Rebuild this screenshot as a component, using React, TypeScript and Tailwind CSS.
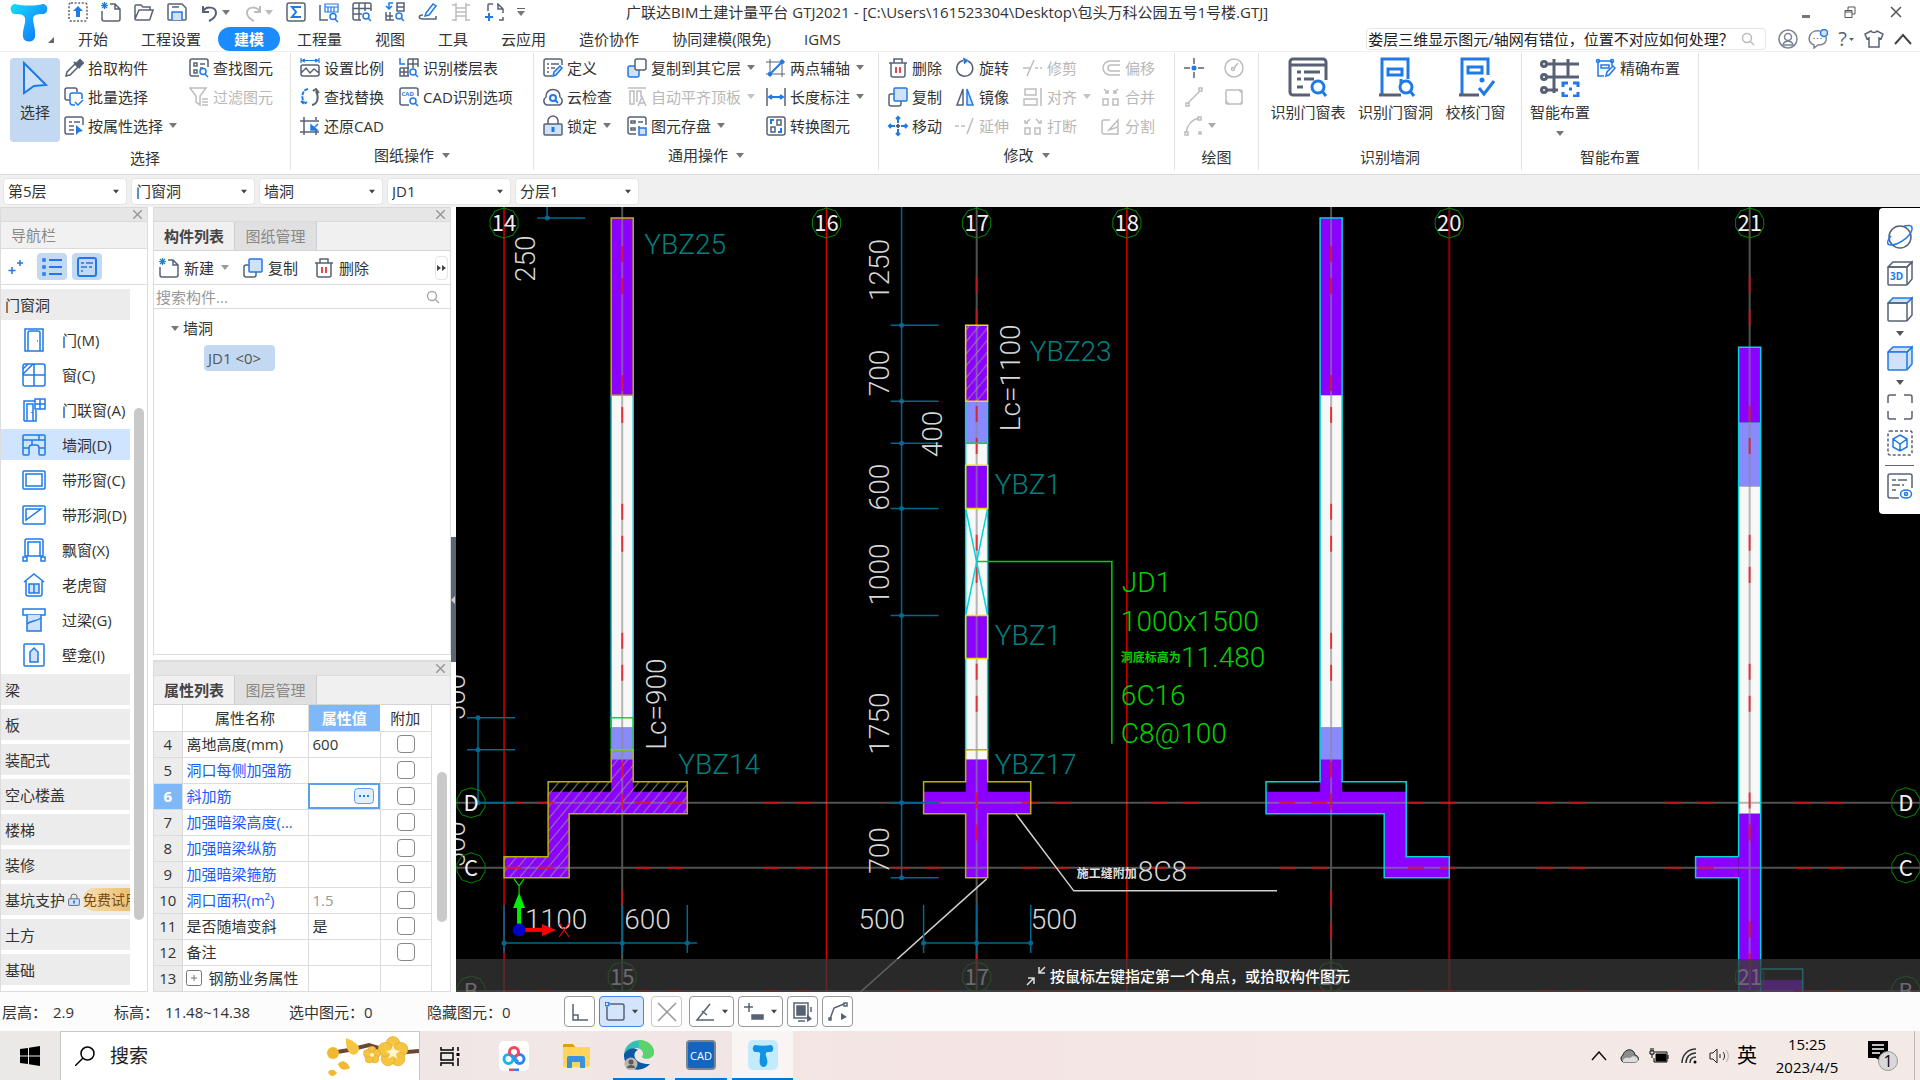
import { ReactNode } from 'react';
import clsx from 'clsx';

const G = '#586174';
const B = '#1f7ae8';
const L = '#cfe2f9';

// 20x20 toolbar glyphs
const glyphs: Record<string, ReactNode> = {
  upload: <><rect x="1" y="1" width="18" height="18" rx="2" strokeDasharray="2 1.6" /><path d="M10 4l5 5h-3v6H8V9H5z" fill={B} stroke="none" /></>,
  newFile: <><path d="M9 2h5l5 5v10a2 2 0 0 1-2 2H3a2 2 0 0 1-2-2V9M14 2v5h5" /><path d="M1 1l5 5M6 1L1 6M3.500 0v7M0 3.500h7" stroke={B} strokeWidth="1.200" /></>,
  open: <path d="M1 17V4a1 1 0 0 1 1-1h5l2 2h7v3M1 17L5 8h14l-3 9a1 1 0 0 1-1 1H2a1 1 0 0 1-1-1z" />,
  save: <><path d="M2 2h13l4 4v11a1 1 0 0 1-1 1H2a1 1 0 0 1-1-1V3a1 1 0 0 1 1-1zM5 5h7" /><path d="M5 18v-8h10v8" stroke={B} fill={L} /></>,
  undo: <path d="M3 4v6h6M3 10c2-6 13-6 13 1 0 4-3 6-7 8" strokeWidth="2" />,
  redo: <path d="M17 4v6h-6M17 10C15 4 4 4 4 11c0 4 3 6 7 8" strokeWidth="2" />,
  sum: <><rect x="1" y="1" width="18" height="18" rx="2" /><path d="M14 6V5H6l4 5-4 5h8v-1" stroke={B} strokeWidth="2" /></>,
  tableFind: <><path d="M1 3v15h8" /><path d="M6 2h13v8H6zM6 5h13M9 5v5M12 5v5M15 5v5" stroke={B} strokeWidth="1.200" /><circle cx="14" cy="14.500" r="3" stroke={B} /><path d="M16 17l3 3" stroke={B} /></>,
  gridFind: <><path d="M9 18H3a2 2 0 0 1-2-2V3a2 2 0 0 1 2-2h14a2 2 0 0 1 2 2v6M7 1v17M13 1v8M1 6.500h18M1 12h9" /><circle cx="14" cy="14" r="3" stroke={B} /><path d="M16 16l3 3" stroke={B} /></>,
  swapFind: <><path d="M1 10v8h8M1 14h7M5 10v8M12 1h7v8h-7zM12 5h7" /><path d="M8 1H4v5M1 4l3 3 3-3" stroke={B} /><circle cx="14" cy="14" r="3" stroke={B} /><path d="M16 16l3 3" stroke={B} /></>,
  brush: <><path d="M8 11l7-9 3 2-7 9-4 1z" stroke={B} /><path d="M5 13c-5 0-5 4 0 4h13v-3" /></>,
  ladder: <path d="M5 1v18M15 1v18M1 3h4M15 3h4M5 6h10M5 10h10M5 14h10M1 18h4M15 18h4" />,
  corners: <><path d="M4 9V3a1 1 0 0 1 1-1h4M13 2h1l5 5v4M19 15v3h-4M14 2v5h5" /><path d="M5 11v8M1 15h8" stroke={B} strokeWidth="2" /></>,
  dropper: <><path d="M2 18l1-4 8-8 3 3-8 8z" /><path d="M10 4l6 6M12 6l4-4 3 3-4 4z" fill={G} strokeWidth="2" /></>,
  batch: <><path d="M6 13H3a2 2 0 0 1-2-2V3a2 2 0 0 1 2-2h8a2 2 0 0 1 2 2v2" /><path d="M11 18H9a3 3 0 0 1-3-3V8a2 2 0 0 1 2-2h8a2 2 0 0 1 2 2v4M11 15l3 3 5-5" stroke={B} /></>,
  byProp: <><path d="M10 18H3a2 2 0 0 1-2-2V3a2 2 0 0 1 2-2h14a2 2 0 0 1 2 2v6M5 6h3M10 6h6M5 10h5M5 14h5" /><path d="M12 9v10l3-3 4-1z" fill={B} stroke="none" /></>,
  findEl: <><path d="M10 18H3a2 2 0 0 1-2-2V3a2 2 0 0 1 2-2h14a2 2 0 0 1 2 2v6M5 5h3v3H5zM5 12h3v3H5zM11 6h5M11 10h3" /><circle cx="14" cy="13.500" r="3" stroke={B} /><path d="M16 16l3 3" stroke={B} /></>,
  funnel: <path d="M1 1h16l-6 8v9l-4-3V9zM13 12h6M13 15h6M13 18h6" />,
  scale: <><path d="M3 7h14a2 2 0 0 1 2 2v7a2 2 0 0 1-2 2H3a2 2 0 0 1-2-2V9a2 2 0 0 1 2-2zM1 15l5-5 4 5 4-4 5 4" /><path d="M1 0v5M19 0v5M2 2.500h16M5 1L2 2.500 5 4M15 1l3 1.500L15 4" stroke={B} strokeWidth="1.200" /></>,
  swap: <><path d="M8 2C2 3 1 10 4 16M1 14l3 3 3-2" stroke={B} strokeWidth="2" strokeDasharray="4 1" /><path d="M12 18c6-1 7-8 4-14M19 6l-3-4-3 2" strokeWidth="2" /></>,
  restore: <><path d="M4 1v18M16 1v3M16 14v5M0 5h19M0 16h19" /><path d="M18 8l-5 5M11 9v5h6z" stroke={B} fill={B} /></>,
  floors: <><path d="M1 0v6h5" stroke={B} /><path d="M9 1h10v8M9 1v17M14 1v9M9 6h10M1 10h9M1 10v8h9M5 10v8M1 14h8" /><circle cx="14" cy="14" r="3" stroke={B} /><path d="M16 16l3 3" stroke={B} /></>,
  cadOpt: <><path d="M10 18H3a2 2 0 0 1-2-2V3a2 2 0 0 1 2-2h14a2 2 0 0 1 2 2v6" /><circle cx="14" cy="14" r="3" stroke={B} /><path d="M16 16l3 3" stroke={B} /><text x="2.500" y="9" fontSize="6" fontWeight="700" fill={B} stroke="none">CAD</text></>,
  define: <><path d="M9 18H3a2 2 0 0 1-2-2V3a2 2 0 0 1 2-2h14a2 2 0 0 1 2 2v4M4 6h2M8 6h8M4 10h2M8 10h4M4 14h2" /><path d="M10 18l1-4 6-6 2 2-6 7z" stroke={B} fill={L} /></>,
  cloud: <><path d="M4 18c-4-1-4-6-1-8C2 0 18 0 17 10c3 2 3 7-1 8z" /><circle cx="10" cy="11" r="3" stroke={B} strokeWidth="2" /><path d="M12 13l3 3" stroke={B} strokeWidth="2" /></>,
  lock: <><path d="M5 9V5a5 5 0 0 1 10 0v4" /><rect x="1" y="8" width="18" height="11" rx="1" fill={L} /><path d="M10 11v5" stroke={B} strokeWidth="3" /></>,
  toFloor: <><rect x="1" y="8" width="11" height="11" rx="2" stroke={B} fill={L} /><rect x="8" y="1" width="11" height="11" rx="2" fill="#fff" /></>,
  alignTop: <path d="M1 1h18M3 4h4v13H3zM10 15V4h4v6M11 19l4-9 4 9M13 16h5" />,
  store: <><path d="M9 18H3a2 2 0 0 1-2-2V3a2 2 0 0 1 2-2h14a2 2 0 0 1 2 2v6M4 5h4v2H4zM4 12h4v2H4zM11 6h5M11 11h2" /><rect x="12" y="12" width="7" height="7" stroke={B} fill={L} /></>,
  twoPoint: <><path d="M4 1v18M16 1v18M0 4h19M0 16h19" strokeWidth="1" /><path d="M4 16L16 4" stroke={B} strokeWidth="2" /><circle cx="4" cy="16" r="1.500" fill={B} stroke={B} /><circle cx="16" cy="4" r="1.500" fill={B} stroke={B} /></>,
  length: <><path d="M1 1v18M19 1v18" /><path d="M4 10h12M6 8l-3 2 3 2M14 8l3 2-3 2" stroke={B} strokeWidth="2" /></>,
  convert: <><rect x="1" y="1" width="18" height="18" rx="2" /><path d="M11 4h4v5h-4zM5 11h4v5H5z" /><path d="M8 4H5v4M12 16h3v-4" stroke={B} strokeWidth="2" /></>,
  trash: <><path d="M1 5h18M6 5V1h8v4M3 5v12a2 2 0 0 0 2 2h10a2 2 0 0 0 2-2V5" /><path d="M8 9v6M12 9v6" stroke="#e5484d" strokeWidth="2" /></>,
  copy: <><path d="M6 7H3a2 2 0 0 0-2 2v8a2 2 0 0 0 2 2h8a2 2 0 0 0 2-2v-3" /><rect x="6" y="1" width="13" height="13" rx="1" stroke={B} fill={L} /></>,
  move: <g stroke={B} strokeWidth="2"><path d="M10 1v6M10 13v6M1 10h6M13 10h6M8 3l2-2 2 2M8 17l2 2 2-2M3 8l-2 2 2 2M17 8l2 2-2 2" /><path d="M10 8v4M8 10h4" stroke={G} /></g>,
  rotate: <><path d="M13 3A8 8 0 1 1 8 2.500" /><path d="M8 0l5 2.500L9 6" stroke={B} fill={B} strokeWidth="1" /></>,
  mirror: <><path d="M8 2v16H2z" /><path d="M12 2v16h6z" stroke={B} fill={L} /></>,
  trim: <path d="M0 10h7M12 10h3M17 10h2M4 18L11 2" />,
  align: <path d="M2 2h11v6H2zM1 12h13v6H1zM18 1v18" />,
  extend: <path d="M0 10h4M6 10h4M12 18l6-16" />,
  offset: <path d="M19 3H9a7 7 0 0 0 0 14h10M19 7h-9a3 3 0 0 0 0 6h9" />,
  merge: <path d="M2 12h5v6H2zM12 12h5v6h-5zM3 2l4 4M17 2l-4 4M7 3v3H4M13 3v3h3" />,
  breakUp: <path d="M2 12h5v6H2zM12 12h5v6h-5zM3 7l4-4M17 7l-4-4M2 4v3h3M18 4v3h-3" />,
  split: <path d="M9 4H3a2 2 0 0 0-2 2v10a2 2 0 0 0 2 2h14v-6M8 14l9-10v7z" />,
  point: <><path d="M10 0v6M10 14v6M0 10h6M14 10h6" /><circle cx="10" cy="10" r="2.500" fill={B} stroke="none" /></>,
  circle: <><circle cx="10" cy="10" r="9" /><circle cx="9" cy="11" r="1.500" /><path d="M10 10l4-5" /></>,
  line: <path d="M4 16L16 4M2 16h3v3H2zM15 1h3v3h-3z" />,
  rect: <><rect x="2" y="3" width="16" height="14" rx="1" /><path d="M2 14l3 3M18 6l-3-3M16 17l2-2" /></>,
  arc: <path d="M2 17C3 10 6 4 15 2M1 16h3v3H1zM14 1h3v3h-3zM15 16h2v2h-2z" />,
  precise: <g stroke={B}><path d="M2 4v14h6M2 3h14M5 7h8v3H5zM16 3v5" /><circle cx="2" cy="3" r="1.500" /><circle cx="16" cy="3" r="1.500" /><path d="M10 18l1-4 6-6 2 2-6 7z" /></g>,
  sparkle: <path d="M5 10v7M1.500 13.500h7M13 3v6M10 6h6" stroke={B} strokeWidth="1.500" />,
  list: <g stroke={B} strokeWidth="2"><path d="M7 3h13M7 10h13M7 17h13" /><path d="M1 2h2v2H1zM1 9h2v2H1zM1 16h2v2H1z" strokeWidth="1.500" /></g>,
  card: <g stroke={B}><rect x="1" y="1" width="18" height="18" rx="2" strokeWidth="2" /><path d="M4 6h3M9 6h7M4 10h6M12 10h3M4 14h2" /></g>,
};

// 24x24 component glyphs in the navigation list
const navGlyphs: Record<string, ReactNode> = {
  door: <><path d="M3 1h18v22H3z" /><path d="M6 23V5a2 2 0 0 1 2-2h8a2 2 0 0 1 2 2v18M15 13h1" /></>,
  window: <><rect x="1" y="1" width="22" height="22" rx="2" /><path d="M12 1v22M1 12h22M1 6l5-5M1 11L11 1" /></>,
  doorWin: <><path d="M2 23V3h11M14 12v11H2M5 23V6h6v17M10 14v1" /><path d="M13 1h10v10H13zM18 1v10M13 6h10" /></>,
  hole: <path d="M2 2h20a1 1 0 0 1 1 1v18a1 1 0 0 1-1 1h-4a1 1 0 0 1-1-1v-6a3 3 0 0 0-3-3h-4a3 3 0 0 0-3 3v6a1 1 0 0 1-1 1H2a1 1 0 0 1-1-1V3a1 1 0 0 1 1-1zM1 7h22M17 2v5M1 15h6M17 15h6M10 7v5" />,
  strip: <><rect x="1" y="3" width="22" height="18" rx="1" /><path d="M4 6h16v12H4z" /></>,
  stripHole: <><rect x="1" y="3" width="22" height="18" rx="1" /><path d="M4 6h15L4 17z" /></>,
  bay: <><path d="M3 18V3a2 2 0 0 1 2-2h14a2 2 0 0 1 2 2v15M6 18V4h12v14M3 18h18" /><path d="M1 19h4v4H1zM19 19h4v4h-4z" /></>,
  dormer: <><path d="M2 9l10-8 10 8M4 8v13a2 2 0 0 0 2 2h12a2 2 0 0 0 2-2V8" /><path d="M7 11h10v9H7zM12 11v9" fill={L} /></>,
  lintel: <><path d="M1 1h22v6H1z" fill="#fff" /><path d="M5 7v16h14V7" fill={L} /><path d="M5 16c4-4 9-2 14-6" /></>,
  niche: <><rect x="2" y="1" width="20" height="22" rx="1" /><path d="M8 19V9l4-4 4 4v10z" fill={L} /></>,
};

function Icon({ name, className }: { name: string; className?: string }) {
  return (
    <svg viewBox="0 0 20 20" className={clsx('shrink-0 overflow-visible', className ?? 'w-5 h-5')} fill="none" stroke={G} strokeWidth="1.500">
      {glyphs[name]}
    </svg>
  );
}

// grey version for commands that are not available
function OffIcon({ name }: { name: string }) {
  return (
    <svg viewBox="0 0 20 20" className="w-5 h-5 shrink-0" fill="none" stroke="#bdbdbd" strokeWidth="1.500">
      {glyphs[name]}
    </svg>
  );
}

function Caret({ className }: { className?: string }) {
  return (
    <svg viewBox="0 0 8 5" className={clsx('w-2 h-[5px] shrink-0', className ?? 'text-[#777]')} fill="currentColor">
      <path d="M0 0h8L4 5z" />
    </svg>
  );
}

function Magnifier({ className }: { className?: string }) {
  return (
    <svg viewBox="0 0 14 14" className={clsx('shrink-0', className)} fill="none" stroke="currentColor" strokeWidth="1.500">
      <circle cx="6" cy="6" r="4.500" />
      <path d="M9.500 9.500L13 13" />
    </svg>
  );
}

interface Cmd { icon: string; text: string; off?: boolean; caret?: boolean }

function Command({ icon, text, off, caret }: Cmd) {
  return (
    <button className={clsx('flex items-center gap-1 h-[29px] whitespace-nowrap', off && 'text-[#b8b8b8]')}>
      {off ? <OffIcon name={icon} /> : <Icon name={icon} />}
      {text}
      {caret && <Caret className={clsx('ml-[2px]', off ? 'text-[#c4c4c4]' : 'text-[#777]')} />}
    </button>
  );
}

function Column({ items, className }: { items: Cmd[]; className?: string }) {
  return (
    <div className={clsx('flex flex-col items-start shrink-0', className)}>
      {items.map((c) => <Command key={c.text} {...c} />)}
    </div>
  );
}

interface GroupProps { label: string; caret?: boolean; className: string; pad?: string; children: ReactNode }

function Group({ label, caret, className, pad = 'pl-[9px]', children }: GroupProps) {
  return (
    <section className={clsx('flex flex-col shrink-0 border-r border-[#e2e2e2] mt-px mb-1', className)}>
      <div className={clsx('flex h-[88px]', pad)}>{children}</div>
      <div className={clsx('flex items-center justify-center gap-2 h-[30px]', !caret && 'pt-1')}>
        {label}
        {caret && <Caret />}
      </div>
    </section>
  );
}

function BigButton({ text, caret, className, children }: { text: string; caret?: boolean; className: string; children: ReactNode }) {
  return (
    <button className={clsx('flex flex-col items-center shrink-0 pt-1', className)}>
      <svg viewBox="0 0 40 40" className="w-10 h-10" fill="none" stroke={G} strokeWidth="3">{children}</svg>
      <span className="leading-[22px] mt-1">{text}</span>
      {caret && <Caret className="mt-2 text-[#777]" />}
    </button>
  );
}

const menus = ['开始', '工程设置', '建模', '工程量', '视图', '工具', '云应用', '造价协作', '协同建模(限免)', 'IGMS'];

function Header() {
  return (
    <header className="flex h-[52px] border-b border-[#efefef] bg-white">
      <div className="flex items-end w-[62px] shrink-0 pl-[10px] pb-2">
        <svg viewBox="0 0 38 40" className="w-[38px] h-10">
          <defs>
            <linearGradient id="logo" x1="0" y1="0" x2="1" y2="1">
              <stop offset="0" stopColor="#17e0f5" />
              <stop offset=".5" stopColor="#14a0ff" />
              <stop offset="1" stopColor="#0b6ff0" />
            </linearGradient>
          </defs>
          <path d="M5 1c9 2 19 2 28 0 5 0 6 8 1 10-5 0-10 0-11 4 0 6 3 12 2 19-1 6-11 6-12 0-1-7 3-13 2-19-1-4-6-4-11-4-5-2-4-10 1-10z" fill="url(#logo)" />
        </svg>
        <svg viewBox="0 0 6 6" className="w-[6px] h-[6px]" fill="#666"><path d="M6 0v6H0z" /></svg>
      </div>
      <div className="flex-1 min-w-0">
        <div className="flex items-center h-[27px] pb-[3px]">
          <div className="flex items-center gap-[13px] w-[564px] shrink-0 pl-[6px]">
            {['upload', 'newFile', 'open', 'save'].map((n) => <button key={n} aria-label={n}><Icon name={n} /></button>)}
            <button aria-label="undo" className="flex items-center gap-[2px]"><Icon name="undo" /><Caret /></button>
            <button aria-label="redo" className="flex items-center gap-[2px]"><OffIcon name="redo" /><Caret className="text-[#bbb]" /></button>
            {['sum', 'tableFind', 'gridFind', 'swapFind', 'brush'].map((n) => <button key={n} aria-label={n}><Icon name={n} /></button>)}
            <button aria-label="ladder"><OffIcon name="ladder" /></button>
            <button aria-label="corners"><Icon name="corners" /></button>
            <button aria-label="more" className="flex flex-col items-center gap-[2px]"><span className="w-2 h-px bg-[#666]" /><Caret /></button>
          </div>
          <h1 className="truncate">广联达BIM土建计量平台 GTJ2021 - [C:\Users\161523304\Desktop\包头万科公园五号1号楼.GTJ]</h1>
          <div className="flex items-center gap-[34px] ml-auto pr-[18px] text-[#555]">
            <button aria-label="minimize" className="w-2 h-[3px] mt-2 bg-[#777]" />
            <button aria-label="restore">
              <svg viewBox="0 0 12 12" className="w-3 h-3" fill="none" stroke="currentColor"><path d="M1 4.500h7v7H1zM1 6h7M4 4V1h7v7H8" /></svg>
            </button>
            <button aria-label="close">
              <svg viewBox="0 0 12 12" className="w-3 h-3" stroke="currentColor" strokeWidth="1.500"><path d="M1 1l10 10M11 1L1 11" /></svg>
            </button>
          </div>
        </div>
        <div className="flex items-center h-6">
          <nav className="flex items-center gap-px">
            {menus.map((m) => (
              <button key={m} className={clsx('h-6 px-4 whitespace-nowrap rounded-full', m === '建模' && 'bg-[#1a8cff] text-white font-bold')}>{m}</button>
            ))}
          </nav>
          <label className="flex items-center ml-auto w-[400px] h-[22px] border border-[#e6e6e6] rounded-sm text-[#bbb]">
            <input aria-label="搜索" defaultValue="娄层三维显示图元/轴网有错位，位置不对应如何处理？" className="flex-1 min-w-0 h-5 pl-px text-[#222] outline-none" />
            <Magnifier className="w-[14px] h-[14px] mx-[10px]" />
          </label>
          <div className="flex items-center gap-[10px] pl-3 pr-2">
            <svg viewBox="0 0 20 20" className="w-5 h-5" fill="none" stroke="#7b8394" strokeWidth="1.500"><circle cx="10" cy="10" r="9" /><circle cx="10" cy="8" r="3.500" /><path d="M5 16c1-5 9-5 10 0z" /></svg>
            <svg viewBox="0 0 20 20" className="w-5 h-5" fill="none" stroke="#7b8394" strokeWidth="1.500"><path d="M12 2C0 0-2 14 6 16v3l4-3c7 0 9-4 8-8M6 9v1M9.500 9v1M13 9v1" /><circle cx="16" cy="4" r="3.500" stroke={B} fill={L} /></svg>
            <button aria-label="帮助" className="flex items-center gap-[2px] text-xl leading-5 text-[#586174]">?<Caret className="w-[5px] text-[#586174]" /></button>
            <svg viewBox="0 0 20 20" className="w-5 h-5" fill="none" stroke={G} strokeWidth="1.500"><path d="M7 2L1 5l2 5 2-1v9h10V9l2 1 2-5-6-3c-1 2-5 2-6 0z" /></svg>
            <svg viewBox="0 0 18 12" className="w-[18px] h-3" fill="none" stroke="#444" strokeWidth="2"><path d="M1 11l8-9 8 9" /></svg>
          </div>
        </div>
      </div>
    </header>
  );
}

function Ribbon() {
  return (
    <div className="flex h-[122px] bg-white overflow-hidden">
      <Group label="选择" className="w-[291px]" pad="pl-[10px]">
        <button className="flex flex-col items-center w-[50px] h-[84px] mt-[5px] mr-1 pt-[3px] rounded bg-[#c3d9f1] shrink-0">
          <svg viewBox="0 0 26 34" className="w-[26px] h-[34px]" fill={L} stroke={B} strokeWidth="2"><path d="M2 2l22 22-12 1-10 7z" /></svg>
          <span className="mt-[6px] leading-[22px]">选择</span>
        </button>
        <Column className="w-[125px]" items={[{ icon: 'dropper', text: '拾取构件' }, { icon: 'batch', text: '批量选择' }, { icon: 'byProp', text: '按属性选择', caret: true }]} />
        <Column items={[{ icon: 'findEl', text: '查找图元' }, { icon: 'funnel', text: '过滤图元', off: true }]} />
      </Group>
      <Group label="图纸操作" caret className="w-[243px]">
        <Column className="w-[99px]" items={[{ icon: 'scale', text: '设置比例' }, { icon: 'swap', text: '查找替换' }, { icon: 'restore', text: '还原CAD' }]} />
        <Column items={[{ icon: 'floors', text: '识别楼层表' }, { icon: 'cadOpt', text: 'CAD识别选项' }]} />
      </Group>
      <Group label="通用操作" caret className="w-[345px]">
        <Column className="w-[84px]" items={[{ icon: 'define', text: '定义' }, { icon: 'cloud', text: '云检查' }, { icon: 'lock', text: '锁定', caret: true }]} />
        <Column className="w-[139px]" items={[{ icon: 'toFloor', text: '复制到其它层', caret: true }, { icon: 'alignTop', text: '自动平齐顶板', off: true, caret: true }, { icon: 'store', text: '图元存盘', caret: true }]} />
        <Column items={[{ icon: 'twoPoint', text: '两点辅轴', caret: true }, { icon: 'length', text: '长度标注', caret: true }, { icon: 'convert', text: '转换图元' }]} />
      </Group>
      <Group label="修改" caret className="w-[296px]">
        <Column className="w-[67px]" items={[{ icon: 'trash', text: '删除' }, { icon: 'copy', text: '复制' }, { icon: 'move', text: '移动' }]} />
        <Column className="w-[68px]" items={[{ icon: 'rotate', text: '旋转' }, { icon: 'mirror', text: '镜像' }, { icon: 'extend', text: '延伸', off: true }]} />
        <Column className="w-[78px]" items={[{ icon: 'trim', text: '修剪', off: true }, { icon: 'align', text: '对齐', off: true, caret: true }, { icon: 'breakUp', text: '打断', off: true }]} />
        <Column items={[{ icon: 'offset', text: '偏移', off: true }, { icon: 'merge', text: '合并', off: true }, { icon: 'split', text: '分割', off: true }]} />
      </Group>
      <Group label="绘图" className="w-[84px]">
        <div className="grid grid-cols-[40px_auto] auto-rows-[29px] items-center">
          <button aria-label="point"><Icon name="point" /></button>
          <button aria-label="circle"><OffIcon name="circle" /></button>
          <button aria-label="line"><OffIcon name="line" /></button>
          <button aria-label="rect"><OffIcon name="rect" /></button>
          <button aria-label="arc" className="flex items-center gap-1"><OffIcon name="arc" /><Caret className="text-[#aaa]" /></button>
        </div>
      </Group>
      <Group label="识别墙洞" className="w-[263px]" pad="pl-[5px]">
        <BigButton text="识别门窗表" className="w-[88px]">
          <path d="M22 38H5a3 3 0 0 1-3-3V5a3 3 0 0 1 3-3h30a3 3 0 0 1 3 3v18M2 8h36M9 15h4M16 15h16M9 22h4M16 22h10M9 30h6" />
          <circle cx="30" cy="30" r="6" stroke={B} /><path d="M34 34l4 5" stroke={B} />
        </BigButton>
        <BigButton text="识别门窗洞" className="w-[87px]">
          <path d="M6 38V2h26v20" stroke={B} /><path d="M12 12h14v6H12zM25 22v4" stroke={B} /><path d="M3 38h22" />
          <circle cx="30" cy="30" r="6" stroke={B} /><path d="M34 34l4 5" stroke={B} />
        </BigButton>
        <BigButton text="校核门窗" className="w-[73px]">
          <path d="M6 38V2h26v16" stroke={B} /><path d="M12 10h14v6H12z" stroke={B} /><path d="M3 38h20" />
          <circle cx="26" cy="23" r="2.500" fill={B} stroke="none" /><path d="M23 31l5 6 10-13" stroke={B} />
        </BigButton>
      </Group>
      <Group label="智能布置" className="w-[177px]" pad="pl-[2px]">
        <BigButton text="智能布置" caret className="w-[72px]">
          <path d="M14 2v34M28 2v18M6 7h33M6 20h33M6 33h12" /><circle cx="4" cy="7" r="2.500" fill="#fff" /><circle cx="4" cy="20" r="2.500" fill="#fff" /><circle cx="4" cy="33" r="2.500" fill="#fff" />
          <path d="M22 24h17v16H22z" fill="#fff" stroke="none" />
          <path d="M23 30v-4h5M33 26h5v4M38 35v4h-5M28 39h-5v-4M29 32h3" stroke={B} />
        </BigButton>
        <Column items={[{ icon: 'precise', text: '精确布置' }]} />
      </Group>
    </div>
  );
}

function Selectors() {
  return (
    <div className="flex items-center gap-1 h-[33px] pl-[3px] bg-[#f0f0f0] border-t border-[#dcdcdc]">
      {[['楼层', '第5层'], ['类别', '门窗洞'], ['类型', '墙洞'], ['构件', 'JD1'], ['分层', '分层1']].map(([label, v]) => (
        <div key={label} className="grid items-center w-[124px] h-[27px]">
          <select aria-label={label} className="col-start-1 row-start-1 w-full h-[27px] pl-1 appearance-none bg-white border border-[#e4e4e4] rounded">
            <option>{v}</option>
          </select>
          <Caret className="col-start-1 row-start-1 justify-self-end mr-2 w-[6px] text-[#444] pointer-events-none" />
        </div>
      ))}
    </div>
  );
}

function CloseStrip() {
  return (
    <div className="flex items-center justify-end h-[15px] shrink-0 pr-[5px] bg-[#e6e6e6] border-y border-[#dadada]">
      <button aria-label="关闭">
        <svg viewBox="0 0 9 9" className="w-[9px] h-[9px]" stroke="#999" strokeWidth="1.500"><path d="M0 0l9 9M9 0L0 9" /></svg>
      </button>
    </div>
  );
}

function PanelTabs({ active, other }: { active: string; other: string }) {
  return (
    <div className="flex h-[29px] shrink-0 bg-[#f0f0f0] border-b border-[#d4d4d4]">
      <button className="w-[81px] border-r border-[#c9ccd2] font-bold text-[#444]">{active}</button>
      <button className="w-[82px] border-r border-[#c9ccd2] bg-[#e0e0e0] text-[#888]">{other}</button>
    </div>
  );
}

const navItems = [
  { icon: 'door', text: '门(M)' },
  { icon: 'window', text: '窗(C)' },
  { icon: 'doorWin', text: '门联窗(A)' },
  { icon: 'hole', text: '墙洞(D)' },
  { icon: 'strip', text: '带形窗(C)' },
  { icon: 'stripHole', text: '带形洞(D)' },
  { icon: 'bay', text: '飘窗(X)' },
  { icon: 'dormer', text: '老虎窗' },
  { icon: 'lintel', text: '过梁(G)' },
  { icon: 'niche', text: '壁龛(I)' },
];

function Navigator() {
  return (
    <aside className="flex flex-col w-[148px] shrink-0 border border-t-0 border-[#dcdcdc] bg-white">
      <CloseStrip />
      <div className="flex items-center h-[27px] shrink-0 pl-[10px] bg-[#f1f1f1] text-[#888] border-b border-[#dcdcdc]">导航栏</div>
      <div className="flex items-center gap-[5px] h-[36px] shrink-0 pl-[6px] border-b border-[#dcdcdc]">
        <button aria-label="sparkle" className="w-[25px]"><Icon name="sparkle" /></button>
        <button aria-label="list" className="flex items-center justify-center w-[30px] h-[27px] rounded bg-[#c3d9f1]"><Icon name="list" /></button>
        <button aria-label="card" className="flex items-center justify-center w-[30px] h-[27px] rounded bg-[#c3d9f1]"><Icon name="card" /></button>
      </div>
      <div className="flex flex-1 min-h-0 justify-between pt-1">
        <div className="flex flex-col gap-1 w-[129px]">
          <div className="flex items-center h-[31px] pl-1 bg-[#ececec]">门窗洞</div>
          {navItems.map((n) => (
            <button key={n.text} className={clsx('flex items-center gap-[16px] h-[31px] pl-[21px] whitespace-nowrap', n.icon === 'hole' && 'bg-[#cfe4fe]')}>
              <svg viewBox="0 0 24 24" className="w-6 h-6 shrink-0" fill="none" stroke={B} strokeWidth="1.500">{navGlyphs[n.icon]}</svg>
              {n.text}
            </button>
          ))}
          {['梁', '板', '装配式', '空心楼盖', '楼梯', '装修', '基坑支护', '土方', '基础'].map((c) => (
            <button key={c} className="flex items-center h-[31px] pl-1 bg-[#ececec] whitespace-nowrap overflow-hidden">
              {c}
              {c === '基坑支护' && (
                <>
                  <Icon name="lock" className="w-3 h-[14px] mx-[3px]" />
                  <span className="h-[23px] leading-[23px] rounded-l-full bg-gradient-to-r from-[#f7dfb0] to-[#e9b96a] text-[#7a4a10] text-sm">免费试用</span>
                </>
              )}
            </button>
          ))}
        </div>
        <div className="w-[10px] mr-[3px] pt-[119px]"><div className="h-[512px] rounded-full bg-[#c9c9c9]" /></div>
      </div>
    </aside>
  );
}

const props = [
  { n: 4, name: '离地高度(mm)', value: '600' },
  { n: 5, name: '洞口每侧加强筋', blue: true },
  { n: 6, name: '斜加筋', blue: true },
  { n: 7, name: '加强暗梁高度(…', blue: true },
  { n: 8, name: '加强暗梁纵筋', blue: true },
  { n: 9, name: '加强暗梁箍筋', blue: true },
  { n: 10, name: '洞口面积(m²)', value: '1.5', blue: true },
  { n: 11, name: '是否随墙变斜', value: '是' },
  { n: 12, name: '备注' },
];

function Panels() {
  return (
    <div className="flex flex-col w-[298px] shrink-0 ml-[5px]">
      <section className="flex flex-col h-[448px] border border-t-0 border-[#dcdcdc] bg-white">
        <CloseStrip />
        <PanelTabs active="构件列表" other="图纸管理" />
        <div className="flex items-center h-[34px] shrink-0 pl-[5px] border-b border-[#dcdcdc]">
          <button className="flex items-center gap-[5px]"><Icon name="newFile" />新建<Caret className="ml-[2px] text-[#999]" /></button>
          <button className="flex items-center gap-[5px] ml-[14px]"><Icon name="copy" />复制</button>
          <button className="flex items-center gap-[5px] ml-4"><Icon name="trash" />删除</button>
          <button aria-label="更多" className="flex items-center justify-center ml-auto mr-[2px] w-[13px] h-6 border border-[#e4e4e4] rounded">
            <svg viewBox="0 0 9 6" className="w-[9px] h-[6px] shrink-0" fill="#444"><path d="M0 0l4 3-4 3zM5 0l4 3-4 3z" /></svg>
          </button>
        </div>
        <label className="flex items-center h-6 shrink-0 pl-[2px] pr-[10px] border-b border-[#dcdcdc] text-[#aaa]">
          <input aria-label="搜索构件" placeholder="搜索构件..." className="flex-1 min-w-0 outline-none placeholder:text-[#999]" />
          <Magnifier className="w-[14px] h-[14px]" />
        </label>
        <div className="flex items-center gap-1 h-[30px] mt-1 pl-[17px]"><Caret />墙洞</div>
        <button className="self-start h-[26px] ml-[50px] mt-[2px] px-1 w-[71px] rounded text-left bg-[#c3d9f1] text-[#555]">JD1 &lt;0&gt;</button>
      </section>
      <section className="flex flex-col flex-1 min-h-0 mt-[5px] border border-[#dcdcdc] bg-white">
        <CloseStrip />
        <PanelTabs active="属性列表" other="图层管理" />
        <div className="flex flex-1 min-h-0 overflow-hidden">
          <table className="w-[277px] h-[285px] table-fixed border-collapse">
            <colgroup><col className="w-[28px]" /><col className="w-[126px]" /><col className="w-[72px]" /><col className="w-[51px]" /></colgroup>
            <thead>
              <tr className="h-[26px] border-b border-[#dcdcdc]">
                <th />
                <th className="font-normal border-x border-[#dcdcdc]">属性名称</th>
                <th className="bg-[#7fb8f8] text-white">属性值</th>
                <th className="font-normal border-r border-[#dcdcdc]">附加</th>
              </tr>
            </thead>
            <tbody>
              {props.map((p) => (
                <tr key={p.n} className="h-[26px] border-b border-[#dcdcdc]">
                  <td className={clsx('text-center', p.n === 6 ? 'bg-[#7fb8f8] text-white font-bold' : 'bg-[#ececec]')}>{p.n}</td>
                  <td className={clsx('pl-1 border-x border-[#dcdcdc] whitespace-nowrap overflow-hidden', p.blue && 'text-[#1a5cff]')}>{p.name}</td>
                  <td className={clsx('pl-1', p.n === 6 && 'outline-2 -outline-offset-2 outline-[#5aa0ea]', p.n === 10 && 'text-[#999]')}>
                    {p.value}
                    {p.n === 6 && (
                      <button aria-label="编辑" className="flex items-center justify-center gap-[2px] ml-auto mr-[6px] w-5 h-4 border border-[#5aa0ea] rounded bg-[#e3effd]">
                        <i className="w-[2px] h-[2px] bg-[#1f7ae8]" /><i className="w-[2px] h-[2px] bg-[#1f7ae8]" /><i className="w-[2px] h-[2px] bg-[#1f7ae8]" />
                      </button>
                    )}
                  </td>
                  <td className="border-x border-[#dcdcdc]">
                    <input type="checkbox" aria-label={p.name} className="block mx-auto w-[18px] h-[18px] appearance-none border border-[#888] rounded-sm bg-white" />
                  </td>
                </tr>
              ))}
              <tr className="h-[26px]">
                <td className="text-center bg-[#ececec]">13</td>
                <td className="border-x border-[#dcdcdc] whitespace-nowrap">
                  <span className="flex items-center gap-[7px] pl-[3px]">
                    <svg viewBox="0 0 16 16" className="w-4 h-4 shrink-0" fill="none" stroke="#777"><rect x=".5" y=".5" width="15" height="15" rx="2" /><path d="M5 8h6M8 5v6" /></svg>
                    钢筋业务属性
                  </span>
                </td>
                <td />
                <td className="border-x border-[#dcdcdc]" />
              </tr>
            </tbody>
          </table>
          <div className="w-[10px] ml-[5px] pt-[67px]"><div className="h-[150px] rounded-full bg-[#c9c9c9]" /></div>
        </div>
      </section>
    </div>
  );
}

const DIM = '#00678f';
const PURPLE = '#8b00ff';
const LILAC = '#8a8aff';
const CYAN = '#00d5dc';
const YELLOW = '#b9b400';
const TEAL = '#008080';
const GREEN = '#00d000';
const PALE = '#d8d8d8';

// filled wall and column pieces: x, y, width, height, fill
const blocks: [number, number, number, number, string][] = [
  [611, 218, 22, 177, PURPLE], [611, 395, 22, 332, '#f8f8f8'], [611, 727, 22, 32, LILAC],
  [965, 325, 22, 76, PURPLE], [965, 401, 22, 42, LILAC], [965, 443, 22, 22, '#f8f8f8'], [965, 465, 22, 43, PURPLE],
  [965, 508, 22, 107, '#f8f8f8'], [965, 615, 22, 43, PURPLE], [965, 658, 22, 101, '#f8f8f8'], [965, 759, 22, 118, PURPLE], [923, 791, 107, 22, PURPLE],
  [1319, 218, 22, 177, PURPLE], [1319, 395, 22, 332, '#f8f8f8'], [1319, 727, 22, 32, LILAC],
  [1737, 347, 22, 75, PURPLE], [1737, 422, 22, 64, LILAC], [1737, 486, 22, 327, '#f8f8f8'], [1737, 813, 22, 178, PURPLE],
  [1694, 856, 43, 21, PURPLE], [1759, 979, 42, 12, PURPLE],
];

const COLUMN_14 = 'M611 749h22v32h54v32H569v64h-65v-21h44v-75h63z';

const outlines: [string, string][] = [
  ['M611 395V727M633 395V727', CYAN],
  ['M611 218h22v177h-22z', YELLOW],
  ['M611 717h22v32h-22z', '#00e020'],
  [COLUMN_14, YELLOW],
  ['M965 401V749M987 401V749M965 508L987 615M987 508L965 615', CYAN],
  ['M965 325h22v76h-22zM965 465h22v43h-22zM965 615h22v43h-22z', '#e6e000'],
  ['M965 443h22', '#00e020'],
  ['M965 749h22v32h43v32h-43v64h-22v-64h-42v-32h42z', YELLOW],
  ['M1319 781V218h22V781h64v75h43v21h-65v-64h-118v-32z', CYAN],
  ['M1737 856V347h22V991M1737 991V877h-43v-21h43M1759 968h42v23', CYAN],
];

function Bubble({ x, y, t }: { x: number; y: number; t: string }) {
  return (
    <g>
      <path d={`M${x} ${y - 15}l9 3 5 8v8l-5 8-9 3-9-3-5-8v-8l5-8z`} fill="none" stroke="#008000" />
      <text x={x} y={y + 8} fontSize="22" textAnchor="middle" fill="#f0f0f0" fontFamily='"Noto Sans CJK SC", sans-serif'>{t}</text>
    </g>
  );
}

// vertical dimension texts, read from bottom to top
const upText: [number, number, string][] = [
  [535, 282, '250'], [888, 301, '1250'], [888, 396, '700'], [941, 457, '400'], [888, 510, '600'], [888, 605, '1000'],
  [888, 754, '1750'], [888, 873, '700'], [1019, 431, 'Lc=1100'], [666, 749, 'Lc=900'], [465, 720, '500'], [465, 867, '500'],
];

const flatText: [number, number, string, string][] = [
  [644, 254, 'YBZ25', TEAL], [1029, 361, 'YBZ23', TEAL], [994, 494, 'YBZ1', TEAL], [994, 644, 'YBZ1', TEAL],
  [994, 773, 'YBZ17', TEAL], [678, 773, 'YBZ14', TEAL],
  [1121, 592, 'JD1', GREEN], [1120, 630, '1000x1500', GREEN], [1180, 666, '11.480', GREEN], [1120, 704, '6C16', GREEN], [1120, 742, 'C8@100', GREEN],
  [525, 928, '1100', PALE], [624, 928, '600', PALE], [858, 928, '500', PALE], [1030, 928, '500', PALE], [1137, 880, '8C8', PALE],
];

const dimDots: [number, number][] = [
  [547, 218], [901, 325], [901, 401], [901, 443], [901, 508], [901, 615], [901, 802], [901, 877], [478, 717], [478, 749], [478, 802],
  [504, 942], [622, 942], [687, 942], [923, 942], [976, 942], [1030, 942],
];

function Drawing() {
  return (
    <svg viewBox="456 207 1464 784" preserveAspectRatio="xMinYMin slice" className="absolute inset-0 w-full h-full">
      <defs>
        <pattern id="hatch" width="10" height="12" patternUnits="userSpaceOnUse">
          <path d="M0 12L10 0" stroke="#909090" strokeWidth="1" />
        </pattern>
      </defs>
      <path d="M504 207V991M826 207V991M1126 207V991" stroke="#d80000" strokeWidth="1.500" />
      <path d="M1448 207V991" stroke="#8f0000" strokeWidth="2" />
      <path d="M611 759h22v32h54v22H569v64h-65v-21h44v-65h63z" fill={PURPLE} />
      <path d="M1319 759h22v32h64v65h43v21h-65v-64h-118v-22h54z" fill={PURPLE} />
      {blocks.map(([x, y, w, h, f], i) => <rect key={i} x={x} y={y} width={w} height={h} fill={f} />)}
      <path d={COLUMN_14} fill="url(#hatch)" />
      <rect x="965" y="325" width="22" height="76" fill="url(#hatch)" />

      {/* axes: grey base line with a red double dash on top */}
      <g stroke="#888" strokeOpacity=".6" strokeWidth="2">
        <path d="M622 207V991M976 207V991M1330 207V991M1748 207V991M456 802H1920M456 867H1920M456 990H1920" />
      </g>
      <g stroke="#f00000" strokeOpacity=".7" strokeWidth="2" strokeDasharray="16 16 16 80.700">
        <path d="M622 246V991M1330 246V991M976 277V991M1748 277V991M506 802H1890M506 867H1890M506 990H1890" />
      </g>

      <g fill="none" strokeWidth="1.500">
        {outlines.map(([d, c]) => <path key={d} d={d} stroke={c} />)}
        <path d="M976 561h135v182" stroke={GREEN} />
        <path d="M1015 813l58 77h203M986 878L860 991" stroke="#d0d0d0" />
        <path d="M547 207v11M537 218h48M901 207V877M890 325h48M890 401h48M890 443h48M890 508h48M890 615h48M890 802h48M890 877h48M478 717v85M467 717h48M467 749h48M478 802h37M504 942h193M504 904v48M622 904v48M687 904v48M923 942h107M923 904v48M976 904v48M1030 904v48" stroke={DIM} />
      </g>
      {dimDots.map(([x, y]) => <circle key={`${x}-${y}`} cx={x} cy={y} r="2.500" fill={DIM} />)}

      <g fontFamily='Roboto, "Liberation Sans", sans-serif' fontSize="28" fontWeight="300">
        {upText.map(([x, y, t]) => <text key={`${x}-${y}`} transform={`translate(${x} ${y}) rotate(-90)`} fill={PALE}>{t}</text>)}
        {flatText.map(([x, y, t, c]) => <text key={`${x}-${y}`} x={x} y={y} fill={c}>{t}</text>)}
      </g>
      <g fontFamily='"Noto Sans CJK SC", sans-serif' fontSize="12" fontWeight="700">
        <text x="1120" y="661" fill={GREEN}>洞底标高为</text>
        <text x="1076" y="877" fill="#e0e0e0">施工缝附加</text>
      </g>

      <Bubble x={504} y={223} t="14" /><Bubble x={826} y={223} t="16" /><Bubble x={976} y={223} t="17" /><Bubble x={1126} y={223} t="18" />
      <Bubble x={1448} y={223} t="20" /><Bubble x={1748} y={223} t="21" />
      <Bubble x={471} y={802} t="D" /><Bubble x={471} y={867} t="C" /><Bubble x={471} y={990} t="B" />
      <Bubble x={1904} y={802} t="D" /><Bubble x={1904} y={867} t="C" /><Bubble x={1904} y={990} t="B" />
      <Bubble x={622} y={976} t="15" /><Bubble x={976} y={976} t="17" /><Bubble x={1330} y={976} t="19" /><Bubble x={1748} y={976} t="21" />

      {/* origin marker */}
      <path d="M519 929V904" stroke="#00f000" strokeWidth="4" />
      <path d="M519 892l6 15h-12z" fill="#00f000" />
      <path d="M514 878l5 7 5-7M519 885v8" stroke="#00f000" fill="none" />
      <path d="M519 929H544" stroke="#f00" strokeWidth="4" />
      <path d="M556 929l-14-6v12z" fill="#f00" />
      <path d="M559 922l10 14M569 922l-10 14" stroke="#f00" />
      <circle cx="519" cy="929" r="6.500" fill="#0000c8" />
    </svg>
  );
}

function Cube({ front, top, side, children }: { front: string; top: string; side: string; children?: ReactNode }) {
  return (
    <svg viewBox="0 0 26 26" className="w-[26px] h-[26px]" fill="none" stroke={front === 'none' ? G : B} strokeWidth="1.500">
      <path d="M20 7l5-5v17l-5 6" fill={side} />
      <path d="M1 7l5-5h19l-5 5z" fill={top} stroke={top === 'none' ? G : B} />
      <rect x="1" y="7" width="19" height="18" rx="1" fill={front} />
      {children}
    </svg>
  );
}

function ViewPalette() {
  return (
    <div className="absolute right-0 top-px flex flex-col items-center w-[41px] h-[306px] pt-4 rounded-l bg-white">
      <button aria-label="动态观察">
        <svg viewBox="0 0 26 26" className="w-[26px] h-[26px]" fill="none" stroke={G} strokeWidth="1.500"><circle cx="13" cy="13" r="11" /><path d="M4 12c-5 6-4 9 0 9 8 0 22-10 21-17 0-3-4-3-8-2" stroke={B} /></svg>
      </button>
      <button aria-label="三维" className="mt-[10px]"><Cube front="none" top="none" side="none"><text x="3" y="20" fontSize="10" fontWeight="700" fill={B} stroke="none">3D</text></Cube></button>
      <button aria-label="俯视" className="flex flex-col items-center gap-[9px] mt-[10px]"><Cube front="none" top={L} side="none" /><Caret className="text-[#555]" /></button>
      <button aria-label="实体" className="flex flex-col items-center gap-[9px] mt-[9px]"><Cube front={L} top={L} side={L} /><Caret className="text-[#555]" /></button>
      <button aria-label="全屏" className="mt-[9px]">
        <svg viewBox="0 0 26 26" className="w-[26px] h-[26px]" fill="none" stroke={G} strokeWidth="1.500"><path d="M1 9V3a2 2 0 0 1 2-2h6M17 1h6a2 2 0 0 1 2 2v6M25 17v6a2 2 0 0 1-2 2h-6M9 25H3a2 2 0 0 1-2-2v-6" /></svg>
      </button>
      <button aria-label="局部三维" className="mt-[10px]">
        <svg viewBox="0 0 26 26" className="w-[26px] h-[26px]" fill="none" stroke={G} strokeWidth="1.500"><rect x="1" y="1" width="24" height="24" rx="2" strokeDasharray="3 2" /><path d="M13 5l7 4v8l-7 4-7-4V9zM6 9l7 5 7-5M13 14v7" stroke={B} /></svg>
      </button>
      <span className="w-[29px] h-px mt-[9px] mb-[7px] bg-[#666]" />
      <button aria-label="显示设置">
        <svg viewBox="0 0 26 26" className="w-[26px] h-[26px]" fill="none" stroke={G} strokeWidth="1.500"><path d="M12 25H3a2 2 0 0 1-2-2V3a2 2 0 0 1 2-2h20a2 2 0 0 1 2 2v12M5 7h4M11 7h9M5 12h8M15 12h2M5 17h4" /><ellipse cx="19" cy="21" rx="5.500" ry="4" stroke={B} /><circle cx="19" cy="21" r="1.500" stroke={B} /></svg>
      </button>
    </div>
  );
}

function Canvas() {
  return (
    <main className="relative flex-1 min-w-0 overflow-hidden bg-black">
      <Drawing />
      <div className="absolute inset-x-0 bottom-0 flex items-center justify-center gap-1 h-[33px] bg-[#383838]/73 text-white font-medium">
        <svg viewBox="0 0 20 20" className="w-5 h-5" fill="none" stroke="#ddd" strokeWidth="1.500"><path d="M19 1l-6 6M13 1v6h6M1 19l7-7M2 12h6v6" /></svg>
        按鼠标左键指定第一个角点，或拾取构件图元
      </div>
      <ViewPalette />
    </main>
  );
}

function Tool({ label, active, caret, dim, children }: { label: string; active?: boolean; caret?: boolean; dim?: boolean; children: ReactNode }) {
  return (
    <button
      aria-label={label}
      className={clsx(
        'flex items-center h-[31px] border rounded',
        caret ? 'w-[45px] justify-between px-[5px]' : 'w-[31px] justify-center',
        active ? 'border-[#3b8cf0] bg-[#d3e4fb]' : dim ? 'border-[#c8c8c8] bg-white' : 'border-[#999] bg-white',
      )}
    >
      <svg viewBox="0 0 20 20" className="w-5 h-5 shrink-0" fill="none" stroke={dim ? '#999' : G} strokeWidth="1.500">{children}</svg>
      {caret && <Caret className="w-[6px] text-[#444]" />}
    </button>
  );
}

function StatusBar() {
  return (
    <footer className="flex items-center h-[39px] pl-[2px] bg-[#fcfcfc] whitespace-nowrap">
      <span className="w-[51px]">层高：</span><span className="w-[61px]">2.9</span>
      <span className="w-[51px]">标高：</span><span className="w-[124px]">11.48~14.38</span>
      <span className="w-[138px]">选中图元：0</span>
      <span className="w-[137px]">隐藏图元：0</span>
      <div className="flex items-center gap-1">
        <Tool label="正交"><path d="M3 2v16h15M3 13h5v5" /></Tool>
        <Tool label="捕捉" active caret><path d="M5 2h12a2 2 0 0 1 2 2v12a2 2 0 0 1-2 2H4a2 2 0 0 1-2-2V5" /><circle cx="2" cy="2" r="2" stroke={B} /></Tool>
        <div className="px-[3px]"><Tool label="交点" dim><path d="M1 1l18 18M19 1L1 19" /></Tool></div>
        <Tool label="角度" caret><path d="M15 2L2 18h17M7 9l5 4" /></Tool>
        <Tool label="偏移" caret><path d="M5 1v9M0 5h9" /><path d="M8 13h11v4H8z" fill={G} /></Tool>
        <Tool label="多选"><path d="M1 1h14v15H1zM18 5v5M5 19h7" /><path d="M4 4h8v9H4z" fill={G} /><path d="M14 12v8l5-3z" fill={G} stroke="none" /></Tool>
        <Tool label="折线"><path d="M2 17L6 6l10-4" /><path d="M13 11v7l6-3z" fill={G} stroke="none" /><path d="M16 1h3v3h-3zM1 16h2v2H1z" /></Tool>
      </div>
    </footer>
  );
}

const petals = (cx: number, cy: number, r: number) =>
  [0, 72, 144, 216, 288].map((a) => (
    <circle key={a} cx={cx + r * 0.6 * Math.sin((a * Math.PI) / 180)} cy={cy - r * 0.6 * Math.cos((a * Math.PI) / 180)} r={r * 0.5} fill="#f5c542" stroke="#d99a1c" strokeWidth=".5" />
  ));

function Taskbar() {
  return (
    <footer className="flex items-stretch h-[50px] bg-gradient-to-r from-[#ebe9e8] via-[#f4e5e4] to-[#f3eae6] text-black">
      <button aria-label="开始" className="flex items-center justify-center w-[60px]">
        <svg viewBox="0 0 20 20" className="w-5 h-5" fill="#000"><path d="M0 3l8-1v7.500H0zM9 1.800L20 0v9.500H9zM0 10.500h8V18l-8-1zM9 10.500h11V20L9 18.200z" /></svg>
      </button>
      <label className="flex items-center w-[360px] border border-[#c8c8c8] bg-white pl-[14px] gap-[15px]">
        <svg viewBox="0 0 20 20" className="w-5 h-5 shrink-0" fill="none" stroke="#000" strokeWidth="1.500"><circle cx="12.500" cy="7.500" r="6.500" /><path d="M8 12l-8 8" /></svg>
        <input aria-label="搜索" placeholder="搜索" className="flex-1 min-w-0 text-[19px] outline-none placeholder:text-[#222]" />
        <svg viewBox="0 0 92 40" className="w-[92px] h-10 shrink-0">
          <path d="M92 15l-24 2-26-8-20 5-12 2" stroke="#6b4636" strokeWidth="4" fill="none" />
          {petals(66, 16, 14)}{petals(45, 19, 8)}
          <path d="M66 9l2 5 5 1-4 3 1 5-4-3-5 3 2-5-4-3 5-1z" fill="#fff6cf" />
          <circle cx="45" cy="19" r="2" fill="#fff6cf" />
          <circle cx="6" cy="17" r="6" fill="#f0b92e" />
          <path d="M19 2c8 3 16 8 12 14s-13 2-12-14z" fill="#f5c542" />
          <path d="M11 28c4-4 8-4 12 4-6 3-10 2-12-4zM1 36c3-4 7-2 9 1-3 4-7 4-9-1z" fill="#f0b92e" />
        </svg>
      </label>
      <button aria-label="任务视图" className="flex items-center justify-center w-[60px]">
        <svg viewBox="0 0 20 20" className="w-5 h-5" fill="none" stroke="#000" strokeWidth="1.500"><path d="M1 1v3h12V1M1 7h12v7H1zM1 20v-3h12v3M18 1v4M18 12v8" /><path d="M18 7v3" strokeWidth="3" /></svg>
      </button>
      <button aria-label="网盘" className="flex items-center justify-center w-[68px]">
        <svg viewBox="0 0 30 30" className="w-[30px] h-[30px]" fill="none" strokeWidth="3"><rect width="30" height="30" rx="5" fill="#fff" stroke="none" /><circle cx="9.500" cy="18" r="4.500" stroke="#16b6f5" /><circle cx="20.500" cy="18" r="4.500" stroke="#2a86f5" /><circle cx="15" cy="11" r="4.500" stroke="#f5455c" /><path d="M12 14l7 7" stroke="#1f9cf8" /><path d="M10 29h5" stroke="#f5455c" /><path d="M15 29h5" stroke="#2a86f5" /></svg>
      </button>
      <button aria-label="文件" className="flex items-center justify-center w-[55px] mr-[10px]">
        <svg viewBox="0 0 28 26" className="w-7 h-[26px]"><path d="M1 2a1 1 0 0 1 1-1h9l3 4H1z" fill="#e0a100" /><rect x="1" y="4" width="27" height="20" rx="1" fill="#ffd458" /><path d="M5 25V15a2 2 0 0 1 2-2h14a2 2 0 0 1 2 2v10h-5v-6h-8v6z" fill="#3a93d8" /></svg>
      </button>
      <button aria-label="Edge" className="flex items-center justify-center w-[52px] mr-[10px] border-b-[3px] border-[#0078d7]">
        <svg viewBox="0 0 30 30" className="w-[30px] h-[30px]">
          <path d="M0 14C2-4 28-4 30 12c0 7-9 8-12 5 3-4 0-9-6-9S2 10 0 14z" fill="#35c1b1" /><path d="M15 0c9 0 15 6 15 12 0 7-9 8-12 5 3-4 1-8-3-9z" fill="#5bd36a" />
          <path d="M0 14c3-6 10-7 14-4-6 2-6 14 12 14C16 35-1 29 0 14z" fill="#0c5aa6" />
          <circle cx="7" cy="24" r="6.500" fill="#b9b5b0" /><circle cx="7" cy="22" r="2.500" fill="#5d5a57" /><path d="M3 28c0-4 8-4 8 0z" fill="#5d5a57" />
        </svg>
      </button>
      <button aria-label="CAD" className="flex items-center justify-center w-[52px] mr-[5px] border-b-[3px] border-[#0078d7]">
        <svg viewBox="0 0 30 30" className="w-[30px] h-[30px]"><rect x="1" y="1" width="28" height="28" rx="3" fill="#1266c2" stroke="#7d8590" strokeWidth="2" /><text x="15" y="20" fontSize="11" textAnchor="middle" fill="#fff">CAD</text></svg>
      </button>
      <button aria-label="GTJ" className="flex items-center justify-center w-[61px] bg-white/60 border-b-[3px] border-[#0078d7]">
        <svg viewBox="0 0 30 30" className="w-[30px] h-[30px]"><rect width="30" height="30" rx="5" fill="#c4ebfd" /><path d="M7 5c5 1 11 1 16 0 3 1 3 6 0 7-4 0-6 0-5 4 1 3 2 6 1 8-1 4-6 4-7 0-1-2 0-5 0-8 1-4-1-4-5-4-3-1-3-6 0-7z" fill="#1192e6" /></svg>
      </button>
      <div className="flex items-center ml-auto">
        <svg viewBox="0 0 16 10" className="w-4 h-[10px] mr-3" fill="none" stroke="#111" strokeWidth="1.500"><path d="M1 9l7-8 7 8" /></svg>
        <svg viewBox="0 0 20 14" className="w-5 h-[14px] mr-[10px]" stroke="#222" strokeWidth="1"><path d="M4 13a4 4 0 0 1 0-7c2-7 11-7 12 0 5 1 4 7 0 7z" fill="#8d8d8d" /><path d="M4 13c-1-4 4-5 7-4 4-4 8 0 8 2-1 2-3 2-3 2z" fill="#ddd" stroke="none" /></svg>
        <svg viewBox="0 0 20 16" className="w-5 h-4 mr-3" fill="none" stroke="#000"><path d="M6 4h12v10H5v-4M2 0v3M4 0v3M1 3h4v3H1zM3 6v4" /><path d="M7 6h10v7H7z" fill="#000" /><path d="M19 7v4" /></svg>
        <svg viewBox="0 0 16 16" className="w-4 h-4 mr-3" fill="none" stroke="#333" strokeWidth="1.500"><path d="M1 15C1 7 7 1 15 1M5 15C5 9 9 5 15 5M9 15c0-4 2-6 6-6" /><circle cx="14" cy="14" r="1.500" fill="#000" stroke="none" /></svg>
        <svg viewBox="0 0 20 16" className="w-5 h-4 mr-2" fill="none" stroke="#222"><path d="M1 5h3l4-4v14l-4-4H1z" /><path d="M11 6v4M14 4c2 2 2 6 0 8" /><path d="M17 2c3 3 3 9 0 12" stroke="#aaa" /></svg>
        <span className="text-xl w-[37px]">英</span>
        <div className="flex flex-col items-center w-[66px] leading-[23px]"><span>15:25</span><span>2023/4/5</span></div>
        <button aria-label="通知" className="ml-[28px] mr-[16px]">
          <svg viewBox="0 0 30 30" className="w-[30px] h-[30px]"><path d="M0 0h20v17h-7v4l-5-4H0z" fill="#000" /><path d="M4 4h12M4 8h12M4 12h8" stroke="#fff" strokeWidth="1.500" /><circle cx="20" cy="20" r="9.500" fill="#d9d9d9" stroke="#999" /><text x="20" y="26" fontSize="16" textAnchor="middle" fill="#000">1</text></svg>
        </button>
        <span className="w-px h-full mr-[5px] bg-[#bdb6b3]" />
      </div>
    </footer>
  );
}

export default function App() {
  return (
    <div className='flex flex-col min-h-screen overflow-hidden bg-white text-[15px] leading-5 text-[#333] font-["Open_Sans","Noto_Sans_CJK_SC",sans-serif]'>
      <Header />
      <Ribbon />
      <Selectors />
      <div className="flex flex-1">
        <Navigator />
        <Panels />
        <div className="flex flex-col justify-center w-[5px] shrink-0">
          <button aria-label="收起" className="flex items-center h-[125px] bg-[#5b6673]">
            <svg viewBox="0 0 4 8" className="w-1 h-2" fill="#ccc"><path d="M4 0v8L0 4z" /></svg>
          </button>
        </div>
        <Canvas />
      </div>
      <StatusBar />
      <Taskbar />
    </div>
  );
}
